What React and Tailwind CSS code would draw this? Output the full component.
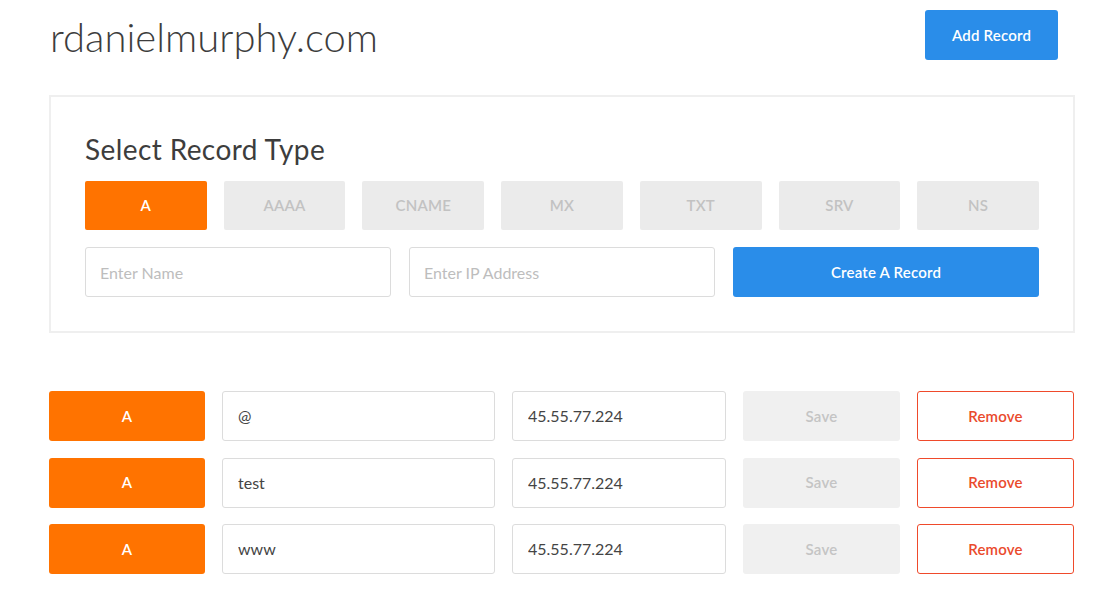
import React from 'react';

const types = ['A', 'AAAA', 'CNAME', 'MX', 'TXT', 'SRV', 'NS'];

const records = [
  { type: 'A', name: '@', value: '45.55.77.224' },
  { type: 'A', name: 'test', value: '45.55.77.224' },
  { type: 'A', name: 'www', value: '45.55.77.224' }
];

export default function App() {
  return (
    <div className="min-h-screen bg-white font-['Lato','Liberation_Sans',sans-serif] text-[#444]">
      <div className="ml-[49px] w-[1026px] pt-[10px]">
        {/* Header */}
        <header className="flex h-[50px] items-start justify-between">
          <h1 className="pl-[1px] pt-[4px] text-[40px] font-light leading-[46px] text-[#3d3d3d]">
            rdanielmurphy.com
          </h1>
          <button className="mr-[17px] h-[50px] w-[133px] rounded-[3px] bg-[#2a8de9] text-[15px] font-semibold tracking-[0.2px] text-white">
            Add Record
          </button>
        </header>

        {/* Record type panel */}
        <section className="mt-[35px] border-2 border-[#efefef] px-[34px] pb-[34px] pt-[34px]">
          <h2 className="text-[28px] font-normal leading-[36px] tracking-[0.4px] text-[#3d3d3d]">Select Record Type</h2>
          <div className="mt-[14px] grid grid-cols-7 gap-[17px]">
            {types.map((t) => (
              <button
                key={t}
                className={`h-[49px] rounded-[2px] text-[15px] font-semibold tracking-[0.2px] ${
                  t === 'A' ? 'bg-[#ff7300] text-white' : 'bg-[#ebebeb] text-[#c2c2c2]'
                }`}
              >
                {t}
              </button>
            ))}
          </div>
          <div className="mt-[17px] grid grid-cols-3 gap-[18px]">
            <input
              placeholder="Enter Name"
              className="h-[50px] rounded-[3px] border border-[#dcdcdc] px-[14px] text-[16px] text-[#444] placeholder-[#bdbdbd] outline-none"
            />
            <input
              placeholder="Enter IP Address"
              className="h-[50px] rounded-[3px] border border-[#dcdcdc] px-[14px] text-[16px] text-[#444] placeholder-[#bdbdbd] outline-none"
            />
            <button className="h-[50px] rounded-[3px] bg-[#2a8de9] text-[15px] font-semibold tracking-[0.2px] text-white">
              Create A Record
            </button>
          </div>
        </section>

        {/* Records list */}
        <div className="mt-[58px] flex flex-col gap-[16.5px]">
          {records.map((r) => (
            <div key={r.name} className="flex h-[50px] gap-[17px]">
              <div className="flex w-[156px] items-center justify-center rounded-[3px] bg-[#ff7300] text-[15px] font-semibold text-white">
                {r.type}
              </div>
              <input
                defaultValue={r.name}
                className="w-[273px] rounded-[3px] border border-[#dcdcdc] px-[15px] text-[16px] text-[#444] outline-none"
              />
              <input
                defaultValue={r.value}
                className="w-[214px] rounded-[3px] border border-[#dcdcdc] px-[15px] text-[16px] text-[#444] outline-none"
              />
              <button className="w-[157px] rounded-[3px] bg-[#f0f0f0] text-[15px] font-semibold tracking-[0.2px] text-[#c4c4c4]">
                Save
              </button>
              <button className="w-[157px] rounded-[3px] border border-[#ef4a2b] bg-white text-[15px] font-semibold tracking-[0.2px] text-[#ea4a2c]">
                Remove
              </button>
            </div>
          ))}
        </div>
      </div>
    </div>
  );
}
